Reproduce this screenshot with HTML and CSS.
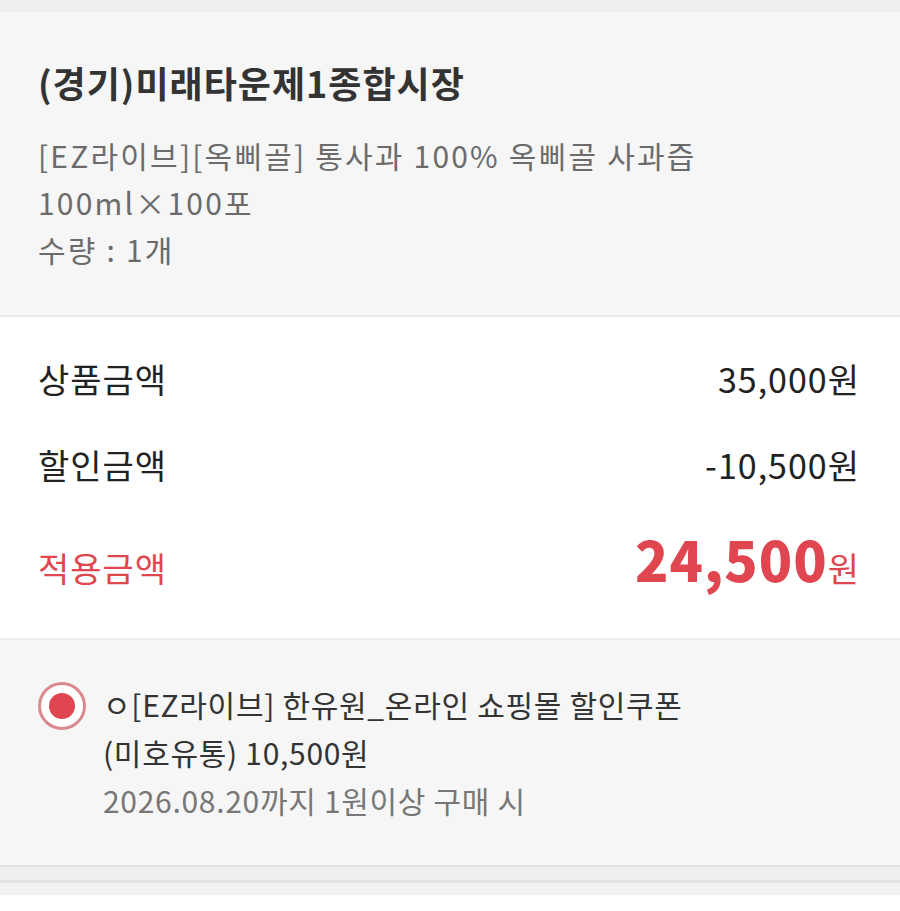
FILE: index.html
```html
<!DOCTYPE html>
<html>
<head>
    <link rel="stylesheet" href="styles.css">
</head>
<body>
    <div class="top-strip"></div>

    <div class="product-box">
        <h1 class="store-name">(경기)미래타운제1종합시장</h1>
        <div class="product-info">
            <p>[EZ라이브][옥삐골] 통사과 100% 옥삐골 사과즙<br>100ml×100포</p>
            <p>수량 : 1개</p>
        </div>
    </div>

    <div class="price-box">
        <div class="price-row">
            <span>상품금액</span>
            <span>35,000원</span>
        </div>
        <div class="price-row">
            <span>할인금액</span>
            <span>-10,500원</span>
        </div>
        <div class="price-row total">
            <span>적용금액</span>
            <span><strong>24,500</strong>원</span>
        </div>
    </div>

    <div class="coupon-box">
        <span class="radio"><span class="radio-dot"></span></span>
        <div class="coupon-text">
            <p>ㅇ[EZ라이브] 한유원_온라인 쇼핑몰 할인쿠폰<br>(미호유통) 10,500원</p>
            <p class="coupon-cond">2026.08.20까지 1원이상 구매 시</p>
        </div>
    </div>

    <div class="bottom-strip"></div>
    <div class="bottom-strip light"></div>
</body>
</html>
```

FILE: styles.css
```css
body {
    margin: 0;
    background-color: #ffffff;
    font-family: "Noto Sans CJK KR", "Noto Sans", sans-serif;
    color: #222222;
}

p {
    margin: 0;
}

.top-strip {
    height: 12px;
    background-color: #eeeeee;
}

.product-box {
    background-color: #f6f6f6;
    padding: 48px 38px 42px;
    border-bottom: 2px solid #ebebeb;
}

.store-name {
    margin: 0 0 28px;
    font-size: 36px;
    font-weight: 700;
    color: #333333;
    letter-spacing: 1px;
    line-height: 44px;
}

.product-info {
    font-size: 30px;
    color: #6b6b6b;
    line-height: 47px;
    letter-spacing: 2.2px;
}

.price-box {
    padding: 19px 40px 20px 38px;
}

.price-row {
    display: flex;
    justify-content: space-between;
    align-items: baseline;
    font-size: 34px;
    line-height: 86px;
    letter-spacing: 1px;
}

.price-row.total {
    color: #e0464f;
    line-height: 100px;
}

.price-row.total strong {
    font-size: 55px;
    font-weight: 800;
    letter-spacing: 1px;
}

.coupon-box {
    display: flex;
    align-items: flex-start;
    gap: 17px;
    background-color: #f6f6f6;
    border-top: 2px solid #ededed;
    padding: 40px 38px 41px;
    border-bottom: 2px solid #e2e2e2;
}

.radio {
    flex: none;
    width: 48px;
    height: 48px;
    border: 3px solid #d98a8f;
    border-radius: 50%;
    box-sizing: border-box;
    display: flex;
    align-items: center;
    justify-content: center;
    background-color: #ffffff;
    margin-top: 2px;
}

.radio-dot {
    width: 26px;
    height: 26px;
    border-radius: 50%;
    background-color: #e0464f;
}

.coupon-text {
    font-size: 30px;
    line-height: 48px;
    color: #333333;
    letter-spacing: 0.7px;
}

.coupon-cond {
    color: #777777;
}

.bottom-strip {
    height: 13px;
    background-color: #eeeeee;
    border-bottom: 3px solid #e3e3e3;
}

.bottom-strip.light {
    height: 12px;
    background-color: #f1f1f1;
    border-bottom: none;
}
```
